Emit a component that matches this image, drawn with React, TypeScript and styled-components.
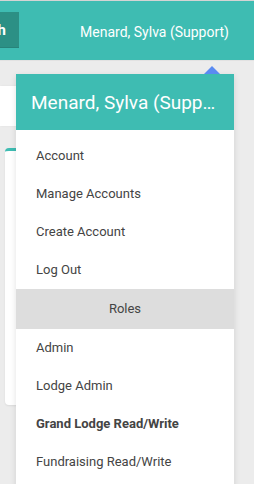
import React from 'react';
import styled, {createGlobalStyle} from 'styled-components';

const teal = '#3ebcb2';

const GlobalStyle = createGlobalStyle`
  html, body {
    margin: 0;
    padding: 0;
    background: #ececec;
    font-family: Roboto, "Liberation Sans", sans-serif;
    overflow: hidden;
  }
`;

const accountItems = ['Account', 'Manage Accounts', 'Create Account', 'Log Out'];
const roleItems = [
  {label: 'Admin'},
  {label: 'Lodge Admin'},
  {label: 'Grand Lodge Read/Write', active: true},
  {label: 'Fundraising Read/Write'},
];

const App: React.FC = () => {
  return (
    <Page>
      <GlobalStyle />
      <TopBar>
        <SearchSlot>
          <SearchButton>Search</SearchButton>
        </SearchSlot>
        <UserName>Menard, Sylva (Support)</UserName>
      </TopBar>
      <Main>
        <SearchBox />
        <Card />
      </Main>
      <Dropdown>
        <Arrow />
        <DropdownHeader>Menard, Sylva (Support)</DropdownHeader>
        <MenuList>
          {accountItems.map((item) => (
            <MenuItem key={item}>{item}</MenuItem>
          ))}
          <SectionLabel>Roles</SectionLabel>
          {roleItems.map((item) => (
            <MenuItem key={item.label} $active={item.active}>
              {item.label}
            </MenuItem>
          ))}
        </MenuList>
      </Dropdown>
    </Page>
  );
};
export default App;

const Page = styled.div`
  position: relative;
  width: 254px;
  height: 484px;
  overflow: hidden;
`;

const TopBar = styled.header`
  height: 59px;
  border-top: 1px solid #d4d4d4;
  border-bottom: 1px solid #e2e2e2;
  background: ${teal};
  display: flex;
  align-items: center;
  justify-content: space-between;
  padding-right: 25px;
`;

const SearchSlot = styled.div`
  width: 19px;
  height: 36px;
  margin-top: -1px;
  overflow: hidden;
  display: flex;
  justify-content: flex-end;
`;

const SearchButton = styled.div`
  flex-shrink: 0;
  height: 35px;
  padding: 0 13px 0 14px;
  display: flex;
  align-items: center;
  background: #2c9085;
  border-bottom: 1px solid #27837a;
  color: white;
  font-weight: bold;
  font-size: 15px;
`;

const UserName = styled.div`
  color: white;
  font-size: 14px;
  margin-top: 2px;
`;

const Main = styled.main`
  padding-top: 25px;
  display: flex;
  flex-direction: column;
  gap: 22px;
`;

const SearchBox = styled.div`
  height: 40px;
  width: 200px;
  background: white;
  box-shadow: 1px 0 2px rgba(0, 0, 0, 0.06);
`;

const Card = styled.div`
  margin-left: 5px;
  width: 200px;
  height: 254px;
  background: white;
  border-top: 3px solid ${teal};
  border-radius: 4px;
  box-shadow: 0 1px 2px rgba(0, 0, 0, 0.08);
`;

const Dropdown = styled.div`
  position: absolute;
  top: 74px;
  left: 16px;
  width: 218px;
  background: white;
  box-shadow: 0 2px 6px rgba(0, 0, 0, 0.12);
`;

const Arrow = styled.div`
  position: absolute;
  top: -8px;
  right: 14px;
  width: 0;
  height: 0;
  border-left: 8px solid transparent;
  border-right: 8px solid transparent;
  border-bottom: 8px solid #5a8bf2;
`;

const DropdownHeader = styled.div`
  height: 56px;
  padding: 0 18px 0 15px;
  background: ${teal};
  color: white;
  font-size: 19px;
  line-height: 58px;
  white-space: nowrap;
  overflow: hidden;
  text-overflow: ellipsis;
`;

const MenuList = styled.div`
  padding: 7px 0 10px;
  display: flex;
  flex-direction: column;
`;

const MenuItem = styled.div<{$active?: boolean}>`
  padding: 9px 20px;
  line-height: 20px;
  font-size: 13px;
  color: #444;
  font-weight: ${(p) => (p.$active ? 'bold' : 'normal')};
`;

const SectionLabel = styled.div`
  padding: 10px 20px;
  line-height: 20px;
  font-size: 13px;
  color: #444;
  text-align: center;
  background: #dddddd;
`;
